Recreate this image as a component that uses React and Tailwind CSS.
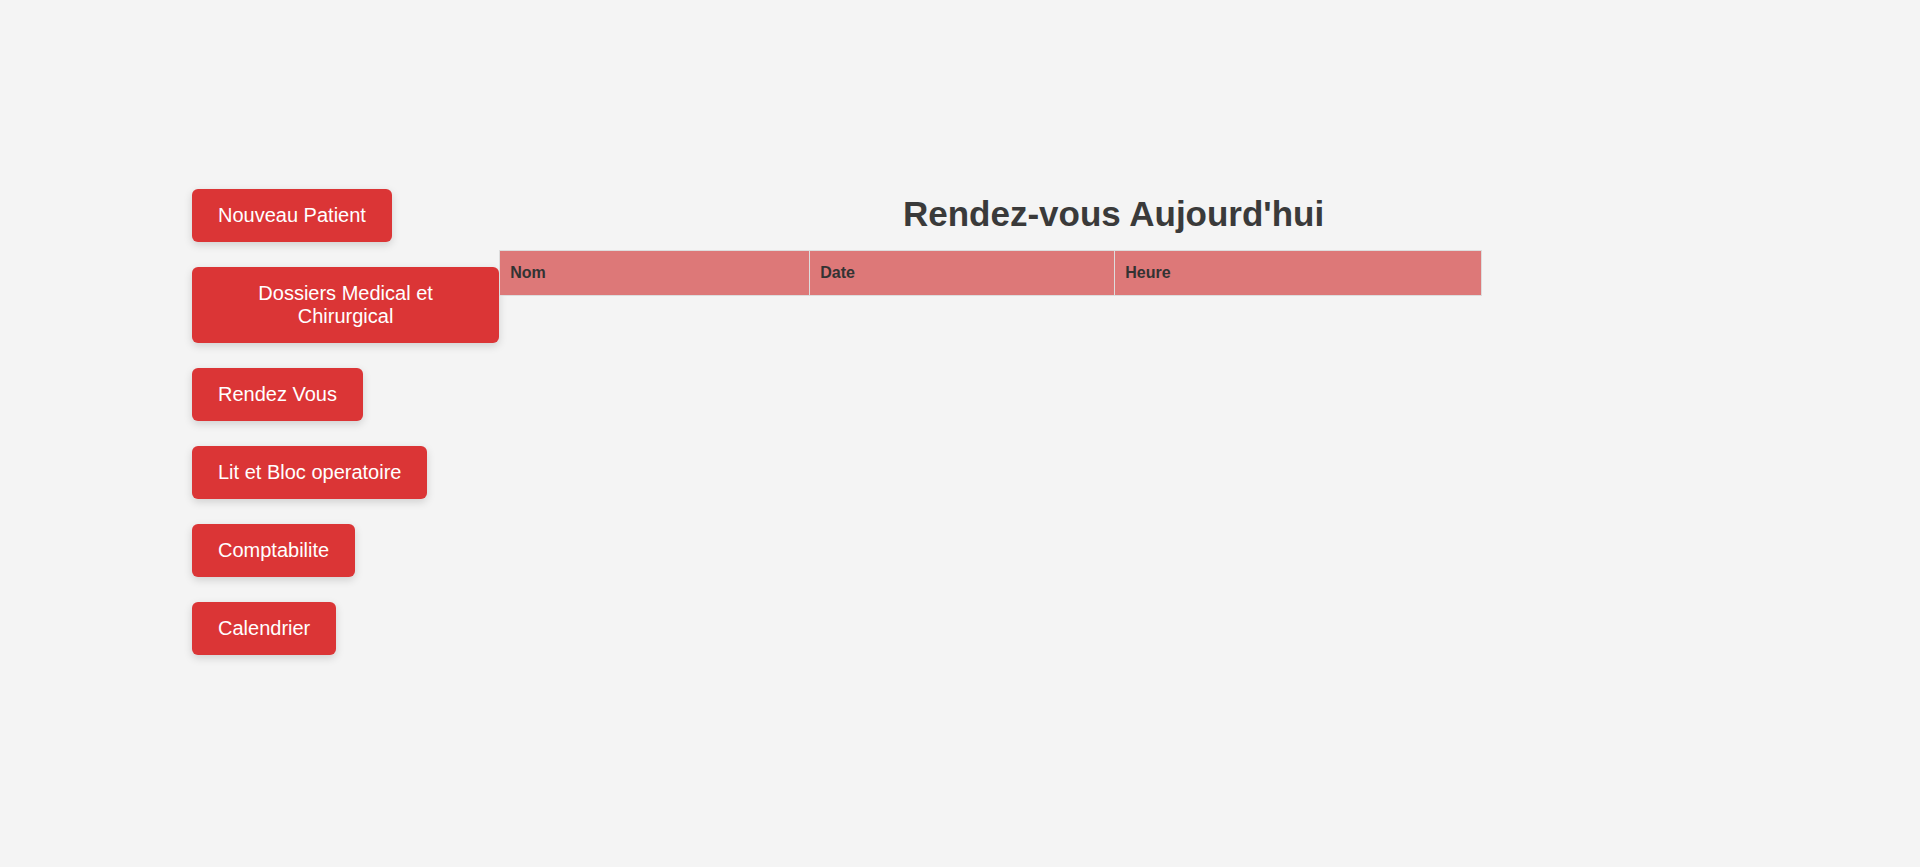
import React from 'react';

const links = [
  'Nouveau Patient',
  'Dossiers Medical et Chirurgical',
  'Rendez Vous',
  'Lit et Bloc operatoire',
  'Comptabilite',
  'Calendrier',
];

const App = () => {
  return (
    <div className="min-h-screen bg-[#f4f4f4] font-['Liberation_Sans',Arial,sans-serif] text-[#333]">
      <div className="flex px-[10%] pt-[189px]">

        {/* Sidebar */}
        <div className="w-[20%] shrink-0 flex flex-col items-start gap-[25px]">
          {links.map((label) => (
            <button
              key={label}
              className="bg-[#db3536] text-white text-[20px] leading-[23px] px-[26px] py-[15px] rounded-[6px] shadow-[0_3px_8px_rgba(0,0,0,0.15)] text-center"
            >
              {label}
            </button>
          ))}
        </div>

        {/* Main */}
        <div className="w-[80%] shrink-0">
          <h1 className="text-center text-[35px] leading-[40px] font-bold text-[#3a3a3a] mt-[5px] mb-[16px]">
            Rendez-vous Aujourd'hui
          </h1>
          <table className="w-[80%] border-collapse">
            <thead>
              <tr className="bg-[#dd7878]">
                <th className="w-[310px] text-left text-[16px] leading-[20px] font-bold px-[10px] py-[12px] border border-[#dddddd]">Nom</th>
                <th className="w-[305px] text-left text-[16px] leading-[20px] font-bold px-[10px] py-[12px] border border-[#dddddd]">Date</th>
                <th className="text-left text-[16px] leading-[20px] font-bold px-[10px] py-[12px] border border-[#dddddd]">Heure</th>
              </tr>
            </thead>
            <tbody></tbody>
          </table>
        </div>

      </div>
    </div>
  );
};

export default App;
